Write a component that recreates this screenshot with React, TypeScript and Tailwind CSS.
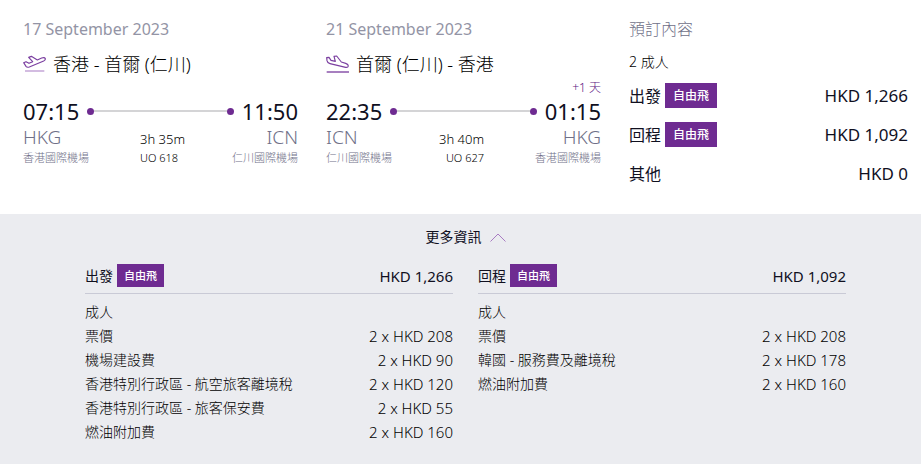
import { useState } from 'react';
import { clsx } from 'clsx';

type Flight = {
  date: string;
  route: string;
  icon: 'takeoff' | 'landing';
  departTime: string;
  departCode: string;
  departAirport: string;
  arriveTime: string;
  arriveCode: string;
  arriveAirport: string;
  duration: string;
  flightNo: string;
  dayOffset?: string;
};

const FLIGHTS: Flight[] = [
  {
    date: '17 September 2023',
    route: '香港 - 首爾 (仁川)',
    icon: 'takeoff',
    departTime: '07:15',
    departCode: 'HKG',
    departAirport: '香港國際機場',
    arriveTime: '11:50',
    arriveCode: 'ICN',
    arriveAirport: '仁川國際機場',
    duration: '3h 35m',
    flightNo: 'UO 618',
  },
  {
    date: '21 September 2023',
    route: '首爾 (仁川) - 香港',
    icon: 'landing',
    departTime: '22:35',
    departCode: 'ICN',
    departAirport: '仁川國際機場',
    arriveTime: '01:15',
    arriveCode: 'HKG',
    arriveAirport: '香港國際機場',
    duration: '3h 40m',
    flightNo: 'UO 627',
    dayOffset: '+1 天',
  },
];

const SUMMARY = [
  { label: '出發', fare: '自由飛', amount: 'HKD 1,266' },
  { label: '回程', fare: '自由飛', amount: 'HKD 1,092' },
  { label: '其他', amount: 'HKD 0' },
];

const BREAKDOWN = [
  {
    label: '出發',
    fare: '自由飛',
    total: 'HKD 1,266',
    items: [
      { name: '票價', price: '2 x HKD 208' },
      { name: '機場建設費', price: '2 x HKD 90' },
      { name: '香港特別行政區 - 航空旅客離境稅', price: '2 x HKD 120' },
      { name: '香港特別行政區 - 旅客保安費', price: '2 x HKD 55' },
      { name: '燃油附加費', price: '2 x HKD 160' },
    ],
  },
  {
    label: '回程',
    fare: '自由飛',
    total: 'HKD 1,092',
    items: [
      { name: '票價', price: '2 x HKD 208' },
      { name: '韓國 - 服務費及離境稅', price: '2 x HKD 178' },
      { name: '燃油附加費', price: '2 x HKD 160' },
    ],
  },
];

function PlaneIcon({ type }: { type: Flight['icon'] }) {
  return (
    <svg
      viewBox="0 0 69 54"
      className="h-[18px] w-[23px] shrink-0"
      fill="none"
      stroke="#7b3fa0"
      strokeWidth="3.5"
      strokeLinejoin="round"
      aria-hidden="true"
    >
      {type === 'takeoff' ? (
        <>
          <path d="M2 23L9 20L18 25L29 20L17 7L25 4L43 15L56 9Q65 6 67 11Q68 15 62 18L19 36Q12 38 9 34Z" />
          <path d="M6 48H64" stroke="#b48ccb" />
        </>
      ) : (
        <>
          <path d="M2 8L9 7L15 16L28 19L24 4L32 3L46 21L59 25Q67 28 67 33Q66 38 59 37L12 26Q4 24 3 17Z" />
          <path d="M2 51H69" strokeWidth="4" />
        </>
      )}
    </svg>
  );
}

function FareBadge({ small, children }: { small?: boolean; children: string }) {
  return (
    <span
      className={clsx(
        'inline-flex items-center bg-[#6e2b91] font-medium text-white',
        small ? 'h-[23px] px-[7px] text-[11px]' : 'h-[25px] px-2 text-xs',
      )}
    >
      {children}
    </span>
  );
}

function FlightCard({ flight }: { flight: Flight }) {
  const outbound = flight.icon === 'takeoff';
  return (
    <section>
      <p className="text-base leading-6 text-[#9394a5]">{flight.date}</p>
      <h2 className="mt-2 flex items-center gap-[7px] text-lg leading-[30px] font-light text-black">
        <PlaneIcon type={flight.icon} />
        {flight.route}
      </h2>
      <p className="h-[18px] text-right text-xs leading-[18px] font-light text-[#5c1682]">{flight.dayOffset}</p>
      <div className="flex items-center justify-between gap-2 text-[22px] leading-7">
        <span>{flight.departTime}</span>
        <span className="flex flex-1 items-center">
          <span className="size-[7px] rounded-full bg-[#6e2b91]" />
          <span className="h-[2px] flex-1 bg-[#d4d4d6]" />
          <span className="size-[7px] rounded-full bg-[#6e2b91]" />
        </span>
        <span>{flight.arriveTime}</span>
      </div>
      <div className="flex justify-between font-light text-[#6f7088]">
        <div>
          <p className="text-[19px] leading-6">{flight.departCode}</p>
          <p className="text-[11px] leading-[18px]">{flight.departAirport}</p>
        </div>
        <div className={clsx('text-black', outbound ? 'pl-1' : 'pr-1 text-right')}>
          <p className="pt-1 text-[13px] leading-5">{flight.duration}</p>
          <p className="text-[11px] leading-[18px]">{flight.flightNo}</p>
        </div>
        <div className="text-right">
          <p className="text-[19px] leading-6">{flight.arriveCode}</p>
          <p className="text-[11px] leading-[18px]">{flight.arriveAirport}</p>
        </div>
      </div>
    </section>
  );
}

export default function App() {
  const [open, setOpen] = useState(true);

  return (
    <main className="min-h-screen bg-[#ebecf0] font-['Noto_Sans','Noto_Sans_CJK_TC',sans-serif] text-[#10101f]">
      <div className="grid grid-cols-[275fr_275fr_279fr] gap-7 bg-white pt-[17px] pr-[13px] pb-[21px] pl-[23px]">
        {FLIGHTS.map((flight) => (
          <FlightCard key={flight.flightNo} flight={flight} />
        ))}

        <section>
          <h2 className="text-base leading-6 font-light text-[#6f7088]">預訂內容</h2>
          <p className="mt-[9px] text-sm leading-6 font-light text-black">2 成人</p>
          <dl className="mt-[2px]">
            {SUMMARY.map((row) => (
              <div key={row.label} className="flex h-[39px] items-center justify-between">
                <dt className="flex items-center gap-1 text-base">
                  {row.label}
                  {row.fare && <FareBadge>{row.fare}</FareBadge>}
                </dt>
                <dd className="text-[17px]">{row.amount}</dd>
              </div>
            ))}
          </dl>
        </section>
      </div>

      <div className="pt-[11px] pr-[75px] pb-5 pl-[85px]">
        <button
          type="button"
          aria-expanded={open}
          onClick={() => setOpen(!open)}
          className="mx-auto flex items-center gap-2 text-sm leading-6"
        >
          更多資訊
          <svg
            viewBox="0 0 16 9"
            className={clsx('h-[9px] w-4', !open && 'rotate-180')}
            fill="none"
            stroke="#a87bc2"
            aria-hidden="true"
          >
            <path d="M.5 8.5L8 1L15.5 8.5" />
          </svg>
        </button>

        {open && (
          <div className="mt-[15px] grid grid-cols-2 gap-[25px] text-sm">
            {BREAKDOWN.map((trip) => (
              <section key={trip.label}>
                <div className="flex items-center justify-between border-b border-[#c9cad6] pb-[6px]">
                  <h3 className="flex items-center gap-1">
                    {trip.label}
                    <FareBadge small>{trip.fare}</FareBadge>
                  </h3>
                  <span className="text-[15px] leading-5">{trip.total}</span>
                </div>
                <p className="mt-[6px] leading-6 font-light text-black">成人</p>
                <dl className="font-light text-black">
                  {trip.items.map((item) => (
                    <div key={item.name} className="flex justify-between leading-6">
                      <dt>{item.name}</dt>
                      <dd className="text-[15px]">{item.price}</dd>
                    </div>
                  ))}
                </dl>
              </section>
            ))}
          </div>
        )}
      </div>
    </main>
  );
}
